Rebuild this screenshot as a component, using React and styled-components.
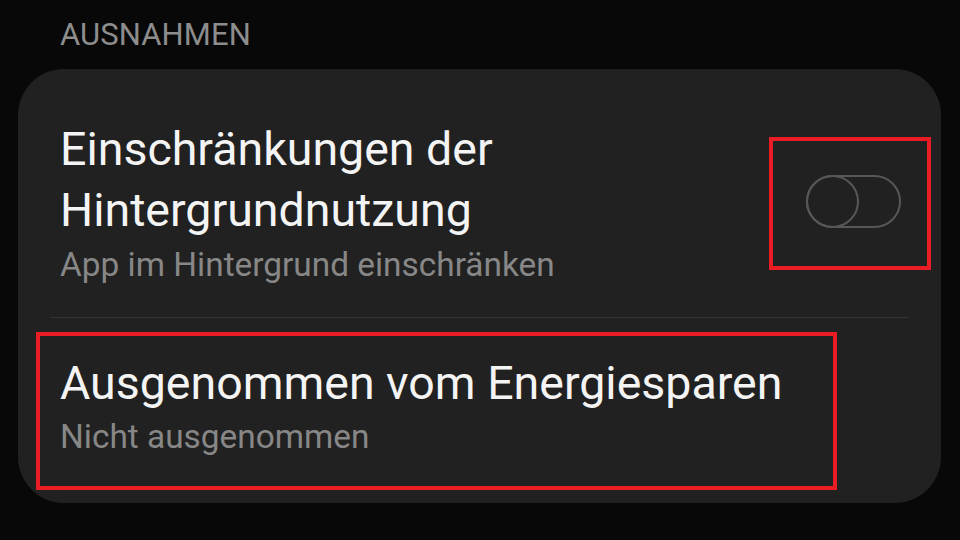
import React from "react";
import styled, { createGlobalStyle } from "styled-components";

const GlobalStyle = createGlobalStyle`
  html, body {
    margin: 0;
    padding: 0;
    background: #080808;
  }
  body {
    font-family: Roboto, "Liberation Sans", sans-serif;
    -webkit-font-smoothing: antialiased;
  }
`;

const Page = styled.div`
  width: 960px;
  height: 540px;
  overflow: hidden;
  background: #080808;
`;

const SectionHeader = styled.div`
  padding: 17px 0 0 60px;
  height: 36px;
  line-height: 36px;
  font-size: 31px;
  color: #8d8d8d;
  letter-spacing: 0.1px;
`;

const Card = styled.div`
  margin: 16px 19px 0 18px;
  background: #212121;
  border-radius: 46px;
`;

const Row = styled.div`
  position: relative;
  display: flex;
  align-items: center;
  justify-content: space-between;
  padding: ${(p) => p.$pad};
`;

const TextBlock = styled.div`
  display: flex;
  flex-direction: column;
`;

const Title = styled.div`
  font-size: 46.5px;
  line-height: 61px;
  color: #f4f4f4;
`;

const Subtitle = styled.div`
  margin-top: ${(p) => p.$gap || 4}px;
  font-size: 33.4px;
  line-height: 40px;
  color: #878787;
`;

const Divider = styled.div`
  height: 1px;
  margin: 0 32px;
  background: #333333;
`;

const ToggleWrap = styled.div`
  position: relative;
  margin-top: -2px;
`;

const Toggle = styled.div`
  position: relative;
  width: 95px;
  height: 53px;
  box-sizing: border-box;
  border: 2px solid #575757;
  border-radius: 27px;

  &::before {
    content: "";
    position: absolute;
    left: -2px;
    top: -2px;
    width: 53px;
    height: 53px;
    box-sizing: border-box;
    border: 2px solid #575757;
    border-radius: 50%;
  }
`;

const Highlight = styled.div`
  position: absolute;
  box-sizing: border-box;
  border: 4px solid #ea1d25;
  pointer-events: none;
`;

export default function App() {
  return (
    <Page>
      <GlobalStyle />
      <SectionHeader>AUSNAHMEN</SectionHeader>
      <Card>
        <Row $pad="50px 40px 32px 42px">
          <TextBlock>
            <Title>
              Einschränkungen der
              <br />
              Hintergrundnutzung
            </Title>
            <Subtitle $gap={4}>App im Hintergrund einschränken</Subtitle>
          </TextBlock>
          <ToggleWrap>
            <Toggle />
            <Highlight style={{ left: -37, right: -30, top: -38, bottom: -42 }} />
          </ToggleWrap>
        </Row>
        <Divider />
        <Row $pad="35px 40px 46px 42px">
          <TextBlock>
            <Title>Ausgenommen vom Energiesparen</Title>
            <Subtitle $gap={3}>Nicht ausgenommen</Subtitle>
          </TextBlock>
          <Highlight style={{ left: 18, top: 14, width: 801, height: 158 }} />
        </Row>
      </Card>
    </Page>
  );
}
